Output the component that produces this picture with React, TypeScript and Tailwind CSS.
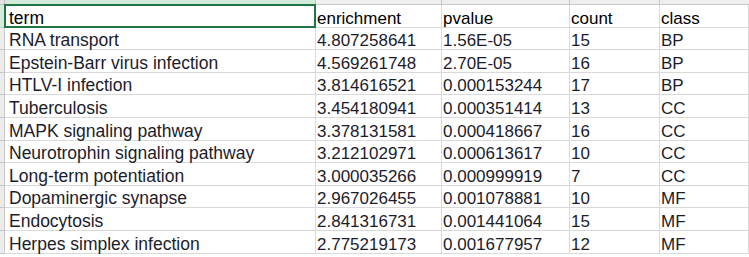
import React from 'react';

const rows = [
  ['RNA transport', '4.807258641', '1.56E-05', '15', 'BP'],
  ['Epstein-Barr virus infection', '4.569261748', '2.70E-05', '16', 'BP'],
  ['HTLV-I infection', '3.814616521', '0.000153244', '17', 'BP'],
  ['Tuberculosis', '3.454180941', '0.000351414', '13', 'CC'],
  ['MAPK signaling pathway', '3.378131581', '0.000418667', '16', 'CC'],
  ['Neurotrophin signaling pathway', '3.212102971', '0.000613617', '10', 'CC'],
  ['Long-term potentiation', '3.000035266', '0.000999919', '7', 'CC'],
  ['Dopaminergic synapse', '2.967026455', '0.001078881', '10', 'MF'],
  ['Endocytosis', '2.841316731', '0.001441064', '15', 'MF'],
  ['Herpes simplex infection', '2.775219173', '0.001677957', '12', 'MF'],
];

const widths = ['w-[311px]', 'w-[126px]', 'w-[128px]', 'w-[90px]', 'flex-1'];

function Row({ cells, header }: { cells: string[]; header?: boolean }) {
  return (
    <div className="flex h-[22.6px]">
      <div
        className={`w-[5px] shrink-0 border-r border-b border-[#c8c8c8] ${
          header ? 'bg-[#d3ebdb]' : 'bg-[#ececec]'
        }`}
      />
      {cells.map((c, i) => (
        <div
          key={i}
          className={`${widths[i]} shrink-0 flex items-end border-b border-r border-[#d9d9d9] ${
            i === 0 ? 'pl-[4px] text-[17.5px]' : 'pl-[1px]'
          } ${header ? 'text-black' : 'text-[#1c1c2a]'} ${
            header && i === 0 ? 'relative' : ''
          }`}
        >
          <span className="leading-[17px] whitespace-nowrap">{c}</span>
          {header && i === 0 && (
            <div className="absolute -left-[1px] -top-[1px] right-[-1px] bottom-[-1px] border-2 border-[#217346]" />
          )}
        </div>
      ))}
    </div>
  );
}

export default function App() {
  return (
    <div className="w-[749px] h-[257px] overflow-hidden bg-white text-[17px] font-['Liberation_Sans',Arial,sans-serif]">
      <div className="flex h-[5px]">
        <div className="w-[5px] shrink-0 bg-[#e4e4e4] border-r border-b border-[#bdbdbd]" />
        <div className="w-[311px] shrink-0 bg-[#d3ebdb] border-r border-b border-[#a9cbb4]" />
        <div className="w-[126px] shrink-0 bg-[#efefef] border-r border-b border-[#c8c8c8]" />
        <div className="w-[128px] shrink-0 bg-[#efefef] border-r border-b border-[#c8c8c8]" />
        <div className="w-[90px] shrink-0 bg-[#efefef] border-r border-b border-[#c8c8c8]" />
        <div className="flex-1 bg-[#efefef] border-b border-[#c8c8c8]" />
      </div>
      <Row header cells={['term', 'enrichment', 'pvalue', 'count', 'class']} />
      {rows.map((r, i) => (
        <Row key={i} cells={r} />
      ))}
    </div>
  );
}
